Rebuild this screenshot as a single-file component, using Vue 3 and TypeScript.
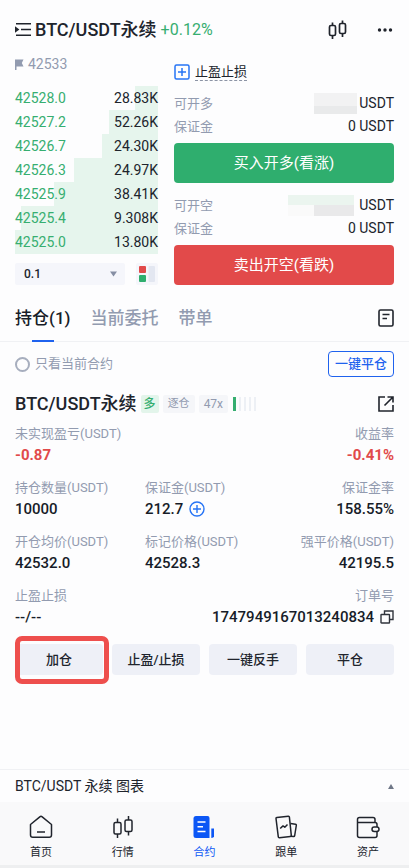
<script setup lang="ts">
import { ref } from 'vue'

interface BookRow {
  price: string
  amount: string
  depth: number
}

interface Field {
  label: string
  value: string
  kind?: 'down' | 'plus' | 'copy'
}

const book: BookRow[] = [
  { price: '42528.0', amount: '28.83K', depth: 16 },
  { price: '42527.2', amount: '52.26K', depth: 34 },
  { price: '42526.7', amount: '24.30K', depth: 39 },
  { price: '42526.3', amount: '24.97K', depth: 59 },
  { price: '42525.9', amount: '38.41K', depth: 73 },
  { price: '42525.4', amount: '9.308K', depth: 96 },
  { price: '42525.0', amount: '13.80K', depth: 100 },
]

const sides = [
  { key: 'long', label: '可开多', action: '买入开多(看涨)' },
  { key: 'short', label: '可开空', action: '卖出开空(看跌)' },
]

const rows: Field[][] = [
  [
    { label: '未实现盈亏(USDT)', value: '-0.87', kind: 'down' },
    { label: '收益率', value: '-0.41%', kind: 'down' },
  ],
  [
    { label: '持仓数量(USDT)', value: '10000' },
    { label: '保证金(USDT)', value: '212.7', kind: 'plus' },
    { label: '保证金率', value: '158.55%' },
  ],
  [
    { label: '开仓均价(USDT)', value: '42532.0' },
    { label: '标记价格(USDT)', value: '42528.3' },
    { label: '强平价格(USDT)', value: '42195.5' },
  ],
  [
    { label: '止盈止损', value: '--/--' },
    { label: '订单号', value: '1747949167013240834', kind: 'copy' },
  ],
]

const actions = ['加仓', '止盈/止损', '一键反手', '平仓']
const tabs = ['持仓(1)', '当前委托', '带单']
const navItems = ['首页', '行情', '合约', '跟单', '资产']

const activeTab = ref(0)
const onlyCurrent = ref(false)
const step = ref('0.1')
</script>

<template>
  <div class="page">
    <header class="top">
      <button class="icon-btn" aria-label="菜单">
        <svg width="17" height="16" viewBox="0 0 17 16" fill="none" stroke="#20242c" stroke-width="1.6">
          <path d="M1 1.8h15M6 7.5h10M1 13.3h15" />
          <path d="M0 4.2l4.4 3.3L0 10.8z" fill="#20242c" stroke="none" />
        </svg>
      </button>
      <h1 class="pair">BTC/USDT永续</h1>
      <span class="change">+0.12%</span>
      <button class="icon-btn candle" aria-label="K线">
        <svg width="19" height="20" viewBox="0 0 19 20" fill="none" stroke="#20242c" stroke-width="1.7">
          <rect x="1.5" y="5.5" width="6" height="10" rx="1.5" />
          <rect x="11.5" y="3.5" width="6" height="10" rx="1.5" />
          <path d="M4.5 2.5v3M4.5 15.5v3.5M14.5 .5v3M14.5 13.5v3.5" />
        </svg>
      </button>
      <button class="icon-btn" aria-label="更多">
        <svg width="16" height="6" viewBox="0 0 16 6" fill="#20242c">
          <circle cx="2.5" cy="3" r="1.7" /><circle cx="8" cy="3" r="1.7" /><circle cx="13.5" cy="3" r="1.7" />
        </svg>
      </button>
    </header>

    <section class="trade">
      <div class="book">
        <div class="mark">
          <svg width="9" height="11" viewBox="0 0 9 11" fill="#929bb0"><path d="M0 .5h8.5L6.8 4l1.7 3.5H1.5V11H0z" /></svg>
          42533
        </div>
        <ul class="depths">
          <li v-for="row in book" :key="row.price">
            <i class="depth" :style="{ width: row.depth + '%' }"></i>
            <span class="price">{{ row.price }}</span>
            <span class="amount">{{ row.amount }}</span>
          </li>
        </ul>
        <div class="book-tools">
          <div class="select-wrap">
            <select v-model="step" aria-label="深度精度"><option>0.1</option></select>
            <svg width="7" height="6" viewBox="0 0 7 6" fill="#858ea3"><path d="M0 .5h7L3.5 5.5z" /></svg>
          </div>
          <button class="layout-btn" aria-label="盘口布局">
            <svg width="16" height="16" viewBox="0 0 16 16">
              <rect width="7" height="7" rx="1" fill="#e14a4a" />
              <rect y="9" width="7" height="7" rx="1" fill="#2fae6e" />
              <rect x="9.5" width="6.5" height="16" rx="1" fill="#e3e7f1" />
            </svg>
          </button>
        </div>
      </div>

      <div class="order">
        <button class="tpsl">
          <svg width="16" height="16" viewBox="0 0 16 16" fill="none" stroke="#2674f5" stroke-width="1.5">
            <rect x="1" y="1" width="14" height="14" rx="1.5" /><path d="M4 8h8M8 4v8" />
          </svg>
          <span>止盈止损</span>
        </button>
        <div v-for="side in sides" :key="side.key" class="side" :class="side.key">
          <div class="info">
            <span class="label">{{ side.label }}</span>
            <span class="amt"><i class="mask"></i>USDT</span>
          </div>
          <div class="info"><span class="label">保证金</span><span class="amt">0 USDT</span></div>
          <button class="submit">{{ side.action }}</button>
        </div>
      </div>
    </section>

    <nav class="tabs">
      <button v-for="(tab, i) in tabs" :key="tab" class="tab" :class="{ active: i === activeTab }" @click="activeTab = i">{{ tab }}</button>
      <button class="icon-btn end" aria-label="历史记录">
        <svg width="16" height="18" viewBox="0 0 16 18" fill="none" stroke="#20242c" stroke-width="1.6">
          <rect x="1" y="1" width="14" height="16" rx="1.5" /><path d="M4.5 5.5h7M4.5 9.5h4.5" />
        </svg>
      </button>
    </nav>

    <div class="filter">
      <label><input v-model="onlyCurrent" type="checkbox" />只看当前合约</label>
      <button class="close-all">一键平仓</button>
    </div>

    <main class="position">
      <div class="pos-head">
        <h2 class="pair">BTC/USDT永续</h2>
        <span class="tag buy">多</span>
        <span class="tag">逐仓</span>
        <span class="tag lever">47x</span>
        <span class="risk"><i></i><i></i><i></i><i></i><i></i></span>
        <button class="icon-btn end" aria-label="分享">
          <svg width="16" height="16" viewBox="0 0 16 16" fill="none" stroke="#20242c" stroke-width="1.6">
            <path d="M7 1H1v14h14V9M9.5 1H15v5.5M15 1L6.5 9.5" />
          </svg>
        </button>
      </div>

      <dl v-for="(row, r) in rows" :key="r" class="fields" :class="{ pairwise: row.length === 2 }">
        <div v-for="field in row" :key="field.label">
          <dt>{{ field.label }}</dt>
          <dd :class="field.kind">
            {{ field.value }}
            <button v-if="field.kind === 'plus'" class="icon-btn" aria-label="追加保证金">
              <svg width="16" height="16" viewBox="0 0 16 16" fill="none" stroke="#2674f5" stroke-width="1.4">
                <circle cx="8" cy="8" r="7" /><path d="M4 8h8M8 4v8" />
              </svg>
            </button>
            <button v-if="field.kind === 'copy'" class="icon-btn" aria-label="复制订单号">
              <svg width="14" height="14" viewBox="0 0 14 14" fill="none" stroke="#30343c" stroke-width="1.4">
                <rect x="1" y="4.5" width="8.5" height="8.5" rx=".5" /><path d="M4.5 4.5V1H13v8.5H9.5" />
              </svg>
            </button>
          </dd>
        </div>
      </dl>

      <div class="actions">
        <div v-for="(action, i) in actions" :key="action" class="action" :class="{ marked: i === 0 }">
          <button>{{ action }}</button>
        </div>
      </div>
    </main>

    <button class="chart-bar">
      BTC/USDT 永续 图表
      <svg width="6" height="5" viewBox="0 0 6 5" fill="#6f7787"><path d="M0 5h6L3 0z" /></svg>
    </button>

    <nav class="bottom">
      <a v-for="(item, i) in navItems" :key="item" href="#" :class="{ active: i === 2 }">
        <svg width="24" height="24" viewBox="0 0 24 24" fill="none" stroke="#20242c" stroke-width="1.5" stroke-linejoin="round">
          <template v-if="i === 0">
            <path d="M1.5 9.5L10.8 1.8q1.2-.9 2.4 0L22.5 9.5V20q0 2.3-2.3 2.3H3.8Q1.5 22.3 1.5 20z" />
            <path d="M8 17h8" />
          </template>
          <template v-else-if="i === 1">
            <rect x="3" y="7.5" width="7" height="11.5" rx="1.5" />
            <rect x="14" y="5" width="7" height="11.5" rx="1.5" />
            <path d="M6.5 3.5v4M6.5 19v4M17.5 1v4M17.5 16.5v4" />
          </template>
          <template v-else-if="i === 2">
            <path d="M4 1h11.5q2 0 2 2v20H4q-2.5 0-2.5-2.5v-17Q1.5 1 4 1z" fill="#0c57f5" stroke="none" />
            <path d="M19.3 13.5H22v7.8q0 1.7-2.7 1.7z" fill="#0c57f5" stroke="none" />
            <path d="M5.5 7h8M5.5 11.8h5.5M5.5 16.5h8" stroke="#fff" />
          </template>
          <template v-else-if="i === 3">
            <path d="M16.5 8.5l5 .8q1 .2.8 1.2l-1.6 10q-.2 1-1.2.9l-3-.2" />
            <path d="M2.8 2.5l11.5-1.3q1-.1 1.1.9l1.9 18.3q.1 1-.9 1.1L5.4 22.7q-1 .1-1.1-.9L2 3.5q-.1-.9.8-1z" />
            <path d="M6.2 13.5l2.8-2.6 1.8 1.3 2.7-2.7" />
          </template>
          <template v-else>
            <path d="M19 7V4.5Q19 2.5 17 2.5H3.5Q1.5 2.5 1.5 4.5v16q0 2 2 2H19q2 0 2-2v-4M21 12V9.5q0-2-2-2H2" />
            <rect x="16" y="12" width="7" height="4.5" rx="2.2" />
          </template>
        </svg>
        <span>{{ item }}</span>
      </a>
    </nav>
  </div>
</template>

<style>
body {
  margin: 0;
  background: #fdfdfe;
}
</style>

<style scoped>
.page {
  box-sizing: border-box;
  display: flex;
  flex-direction: column;
  min-height: 100vh;
  border-bottom: 3px solid #eeeff0;
  color: #20242c;
  font-family: Roboto, 'Noto Sans CJK SC', sans-serif;
  font-size: 13px;
  line-height: 20px;
}
button,
select {
  margin: 0;
  padding: 0;
  border: 0;
  background: none;
  color: inherit;
  font: inherit;
}
svg {
  display: block;
  flex: none;
}
h1,
h2,
ul,
dl,
dd {
  margin: 0;
  padding: 0;
}
.icon-btn {
  flex: none;
}
.end {
  margin-left: auto;
}
.top {
  display: flex;
  align-items: center;
  height: 24px;
  padding: 18px 16px 12px 15px;
}
.pair {
  font-size: 18px;
  font-weight: 500;
  line-height: 24px;
  white-space: nowrap;
}
.top .pair {
  margin-left: 3px;
}
.change {
  margin-left: 4px;
  color: #36ae70;
  font-size: 16px;
}
.candle {
  margin-left: auto;
  margin-right: 30px;
}
.trade {
  display: grid;
  grid-template-columns: 143fr 220fr;
  gap: 16px;
  padding: 0 15px;
}
.mark {
  display: flex;
  align-items: center;
  gap: 4px;
  height: 20px;
  margin-bottom: 12px;
  color: #929bb0;
  font-size: 14px;
}
.depths {
  list-style: none;
}
.depths li {
  position: relative;
  display: flex;
  justify-content: space-between;
  line-height: 24px;
  font-size: 14px;
}
.depth {
  position: absolute;
  top: 0;
  right: 0;
  bottom: 0;
  background: #e6f5ed;
}
.price,
.amount {
  position: relative;
}
.price {
  color: #36ae70;
}
.book-tools {
  display: flex;
  gap: 11px;
  margin-top: 9px;
}
.select-wrap {
  position: relative;
  flex: 1;
  background: #f5f6fb;
  border-radius: 2px;
}
.select-wrap select {
  appearance: none;
  width: 100%;
  height: 22px;
  padding-left: 9px;
  font-size: 12px;
  font-weight: 500;
}
.select-wrap svg {
  position: absolute;
  top: 8px;
  right: 8px;
  pointer-events: none;
}
.layout-btn {
  display: grid;
  place-items: center;
  width: 22px;
  height: 22px;
  background: #f5f6fb;
  border-radius: 2px;
}
.order {
  display: flex;
  flex-direction: column;
  padding-top: 8px;
}
.tpsl {
  display: flex;
  align-items: center;
  gap: 5px;
  height: 20px;
  margin-bottom: 10px;
}
.tpsl span {
  border-bottom: 1px dashed #8c94a5;
  line-height: 16px;
}
.side + .side {
  margin-top: 11px;
}
.info {
  display: flex;
  justify-content: space-between;
  height: 23px;
  line-height: 23px;
}
.label,
dt {
  color: #929bb0;
}
.amt {
  display: flex;
  align-items: center;
  font-size: 14px;
}
.mask {
  width: 43px;
  height: 21px;
  margin-right: 2px;
  background: linear-gradient(#f2f2f3 60%, #e9eaeb 60%);
}
.short .mask {
  width: 66px;
  margin-right: 5px;
  background: linear-gradient(#ebf5ef 50%, transparent 50%), linear-gradient(90deg, #fafafa 40%, #e9e9ea 40%);
}
.submit {
  width: 100%;
  height: 40px;
  margin-top: 5px;
  border-radius: 4px;
  background: #2fae6e;
  color: #fff;
  font-size: 15px;
}
.short .submit {
  background: #e24a4a;
}
.tabs {
  display: flex;
  align-items: center;
  gap: 20px;
  height: 46px;
  margin-top: 10px;
  padding: 0 15px;
  border-bottom: 1px solid #f0f1f4;
}
.tab {
  position: relative;
  height: 46px;
  color: #929bb0;
  font-size: 17px;
  font-weight: 500;
}
.tab.active {
  color: #171c28;
}
.tab.active::after {
  content: '';
  position: absolute;
  bottom: -1px;
  left: calc(50% - 11px);
  width: 22px;
  height: 2px;
  background: #1f62ee;
}
.filter {
  display: flex;
  align-items: center;
  justify-content: space-between;
  padding: 9px 15px 0;
}
.filter label {
  display: flex;
  align-items: center;
  gap: 5px;
  color: #929bb0;
}
.filter input {
  appearance: none;
  box-sizing: border-box;
  width: 15px;
  height: 15px;
  margin: 0;
  border: 2px solid #a7aebe;
  border-radius: 50%;
}
.filter input:checked {
  background: #2674f5;
}
.close-all {
  height: 26px;
  padding: 0 6px;
  border: 1px solid #1f62ee;
  border-radius: 4px;
  color: #1f62ee;
  font-weight: 500;
}
.position {
  padding: 15px 15px 0;
}
.pos-head {
  display: flex;
  align-items: center;
  height: 24px;
  margin-bottom: 7px;
}
.tag {
  height: 18px;
  margin-left: 4px;
  padding: 0 5px;
  border-radius: 2px;
  background: #f5f6f9;
  color: #929bb0;
  font-size: 11px;
  line-height: 18px;
}
.tag.buy {
  padding: 0 3px;
  background: #e3f5eb;
  color: #36ae70;
  font-size: 12px;
  font-weight: 500;
}
.tag.lever {
  font-size: 12px;
}
.risk {
  display: flex;
  gap: 3px;
  margin-left: 5px;
}
.risk i {
  width: 2px;
  height: 14px;
  background: #edf0f5;
}
.risk i:first-child {
  width: 3px;
  background: #36ae70;
}
.fields {
  display: grid;
  grid-template-columns: 12fr 11fr 12fr;
  margin-bottom: 12px;
}
.fields.pairwise {
  grid-template-columns: 1fr 2fr;
}
.fields > div {
  display: flex;
  flex-direction: column;
}
.fields > div:last-child {
  align-items: flex-end;
}
dt {
  line-height: 22px;
  height: 22px;
}
dd {
  display: flex;
  align-items: center;
  gap: 6px;
  height: 20px;
  color: #171c28;
  font-size: 15px;
  font-weight: 500;
}
dd.down {
  color: #e14a4a;
  font-weight: 700;
}
.actions {
  display: grid;
  grid-template-columns: repeat(4, 1fr);
  gap: 9px;
  padding-top: 5px;
}
.action {
  position: relative;
}
.action button {
  width: 100%;
  height: 31px;
  border-radius: 4px;
  background: #eef0f7;
  font-weight: 500;
}
.marked::after {
  content: '';
  position: absolute;
  inset: -8px -6px -9px 0;
  border: 5px solid #ee4f4d;
  border-radius: 7px;
  pointer-events: none;
}
.chart-bar {
  display: flex;
  align-items: center;
  justify-content: space-between;
  height: 33px;
  margin-top: auto;
  padding: 0 15px;
  border-top: 1px solid #f0f1f4;
  font-size: 14px;
}
.bottom {
  display: flex;
  height: 63px;
  background: #f9f9fa;
}
.bottom a {
  display: flex;
  flex: 1;
  flex-direction: column;
  align-items: center;
  gap: 4px;
  padding-top: 13px;
  color: inherit;
  font-size: 11px;
  line-height: 20px;
  text-decoration: none;
}
.bottom a.active {
  color: #0c57f5;
}
</style>
